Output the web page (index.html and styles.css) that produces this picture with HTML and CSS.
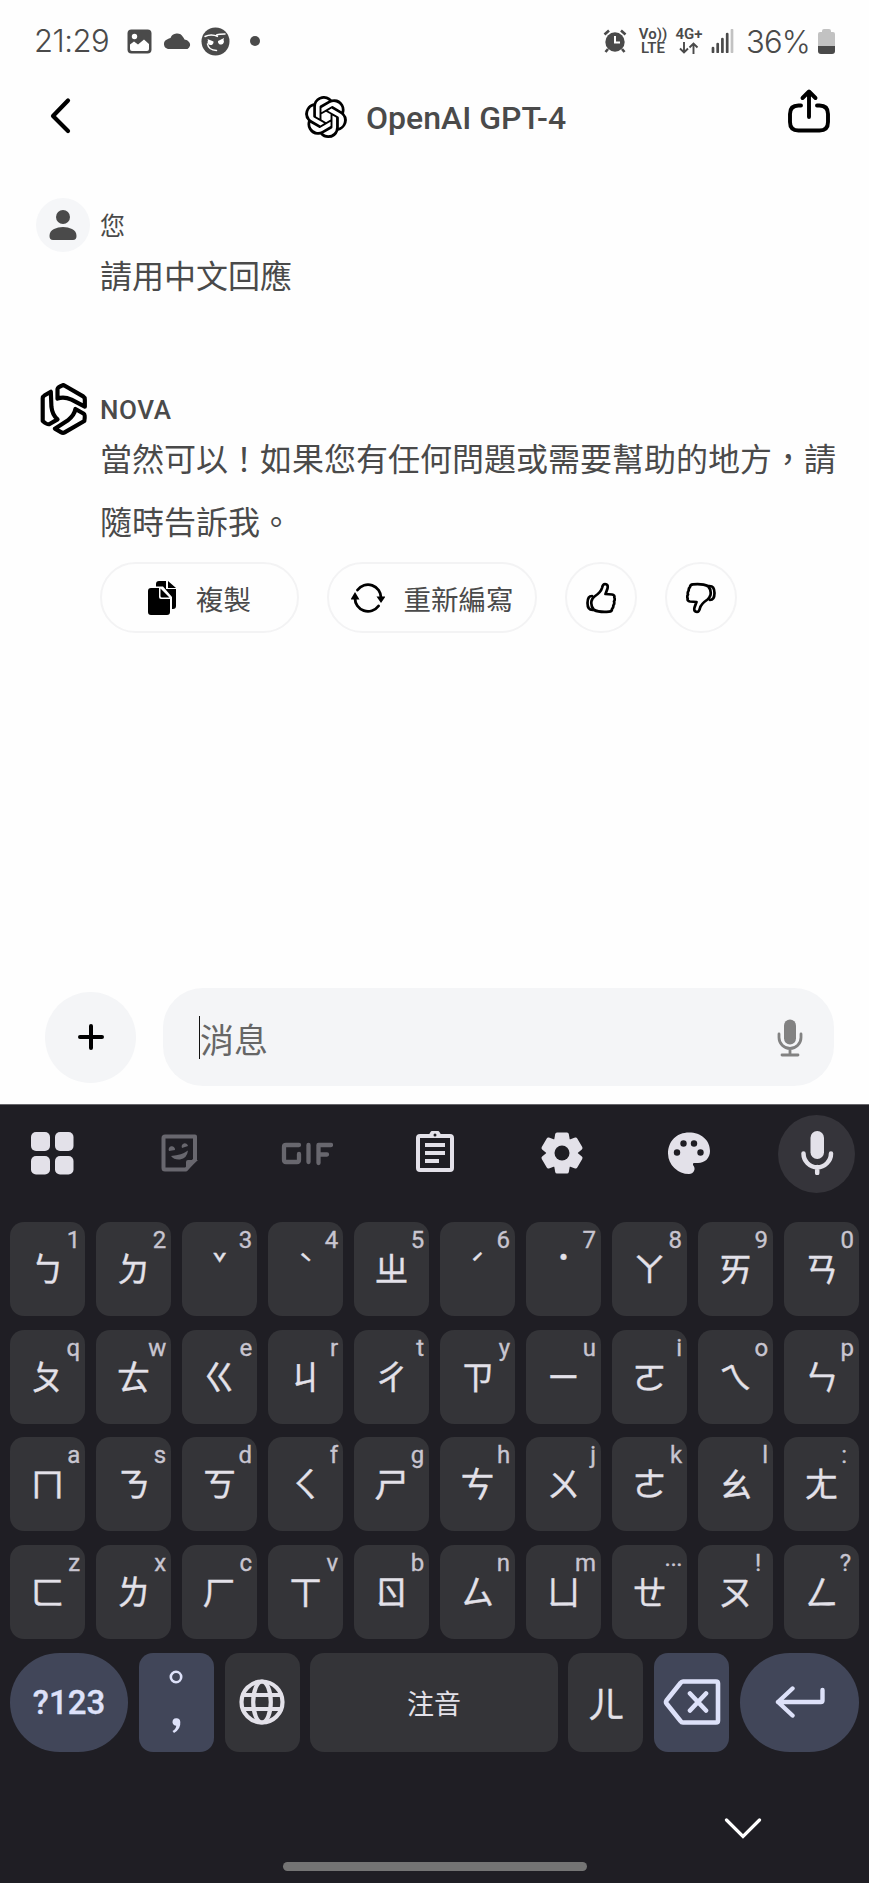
FILE: index.html
```html
<!DOCTYPE html>
<html lang="zh-Hant">
<head>
<meta charset="utf-8">
<title>OpenAI GPT-4</title>
<link rel="stylesheet" href="styles.css">
</head>
<body>
<div class="screen">
  <div class="status">
    <span class="clock">21:29</span>
    <svg class="st-image" width="25" height="25" viewBox="0 0 25 25"><rect x=".5" y=".5" width="24" height="24" rx="4" fill="#4a4a4a"/><circle cx="7.5" cy="7.5" r="2.7" fill="#fff"/><path d="M3 15.500 L7 12.500 L11 15.500 L17 10.500 L22 15 V20 Q22 22 20 22 H5 Q3 22 3 20Z" fill="#fff"/></svg>
    <svg class="st-cloud" width="28" height="16" viewBox="0 0 28 16"><path d="M5 16a5 5 0 0 1-1-9.500Q6 5 7.500 5A7 7 0 0 1 20 4q1 1 1.500 2.500 3 0 4.500 2.500a4.500 4.500 0 0 1-1.500 7Z" fill="#4a4a4a"/></svg>
    <svg class="st-face" width="29" height="29" viewBox="0 0 29 29"><circle cx="14.500" cy="14.500" r="14" fill="#4a4a4a"/><g fill="none" stroke="#fff" stroke-width="1.500" stroke-linecap="round"><path d="M4 9.500Q10 6.500 17 9.500Q12 7 24 7M6.500 17q1 6 9 6.500"/></g><path d="M6.500 12l6 2.500a3 3 0 1 1-5.500-1zM23 11l-6 3a3 3 0 1 0 5.500-1z" fill="#fff"/></svg>
    <i class="st-dot"></i>
    <div class="status-right">
      <svg class="alarm" width="24" height="24" viewBox="0 0 24 24"><circle cx="12" cy="13" r="9.700" fill="#4a4a4a"/><path d="M1.500 5.500L6 1.500M22.500 5.500L18 1.500M5 20l-2.500 3M19 20l2.500 3" stroke="#4a4a4a" stroke-width="2.600"/><path d="M12 7v6.500h5" fill="none" stroke="#fff" stroke-width="2"/></svg>
      <span class="mini volte"><b>Vo))</b><b>LTE</b></span>
      <span class="mini net"><b>4G+</b><svg width="20" height="12" viewBox="0 0 20 12"><path d="M5 0v10.500M1 6.500l4 4 4-4M14.500 12V1.500M10.500 5.500l4-4 4 4" fill="none" stroke="#4a4a4a" stroke-width="1.900"/></svg></span>
      <svg class="signal" width="23" height="24" viewBox="0 0 23 24"><path d="M2 19v4M6.700 15v8M11.400 10v13M16.200 5v18" stroke="#4a4a4a" stroke-width="2.700" stroke-linecap="round"/><path d="M21 1v22" stroke="#c2c2c2" stroke-width="2.700" stroke-linecap="round"/></svg>
      <span class="percent">36%</span>
      <svg width="17" height="25" viewBox="0 0 17 25"><path d="M0 5q0-2 2-2h2V2q0-2 2-2h5q2 0 2 2v1h2q2 0 2 2v12.500H0z" fill="#c2c2c2"/><path d="M0 17h17v5q0 3-3 3H3q-3 0-3-3z" fill="#4a4a4a"/></svg>
    </div>
  </div>

  <header class="header">
    <svg width="24" height="38" viewBox="0 0 24 38"><path d="M19 3.500L4 19l15 15" fill="none" stroke="#000" stroke-width="4.200" stroke-linecap="round" stroke-linejoin="round"/></svg>
    <div class="title">
      <svg width="42" height="42" viewBox="0 0 24 24"><path d="M22.2819 9.8211a5.9847 5.9847 0 0 0-.5157-4.9108 6.0462 6.0462 0 0 0-6.5098-2.9A6.0651 6.0651 0 0 0 4.9807 4.1818a5.9847 5.9847 0 0 0-3.9977 2.9 6.0462 6.0462 0 0 0 .7427 7.0966 5.98 5.98 0 0 0 .511 4.9107 6.051 6.051 0 0 0 6.5146 2.9001A5.9847 5.9847 0 0 0 13.2599 24a6.0557 6.0557 0 0 0 5.7718-4.2058 5.9894 5.9894 0 0 0 3.9977-2.9001 6.0557 6.0557 0 0 0-.7475-7.0729zm-9.022 12.6081a4.4755 4.4755 0 0 1-2.8764-1.0408l.1419-.0804 4.7783-2.7582a.7948.7948 0 0 0 .3927-.6813v-6.7369l2.02 1.1686a.071.071 0 0 1 .038.052v5.5826a4.504 4.504 0 0 1-4.4945 4.4944zm-9.6607-4.1254a4.4708 4.4708 0 0 1-.5346-3.0137l.142.0852 4.783 2.7582a.7712.7712 0 0 0 .7806 0l5.8428-3.3685v2.3324a.0804.0804 0 0 1-.0332.0615L9.74 19.9502a4.4992 4.4992 0 0 1-6.1408-1.6464zM2.3408 7.8956a4.485 4.485 0 0 1 2.3655-1.9728V11.6a.7664.7664 0 0 0 .3879.6765l5.8144 3.3543-2.0201 1.1685a.0757.0757 0 0 1-.071 0l-4.8303-2.7865A4.504 4.504 0 0 1 2.3408 7.872zm16.5963 3.8558L13.1038 8.364 15.1192 7.2a.0757.0757 0 0 1 .071 0l4.8303 2.7913a4.4944 4.4944 0 0 1-.6765 8.1042v-5.6772a.79.79 0 0 0-.407-.667zm2.0107-3.0231l-.142-.0852-4.7735-2.7818a.7759.7759 0 0 0-.7854 0L9.409 9.2297V6.8974a.0662.0662 0 0 1 .0284-.0615l4.8303-2.7866a4.4992 4.4992 0 0 1 6.6802 4.66zM8.3065 12.863l-2.02-1.1638a.0804.0804 0 0 1-.038-.0567V6.0742a4.4992 4.4992 0 0 1 7.3757-3.4537l-.142.0805L8.704 5.459a.7948.7948 0 0 0-.3927.6813zm1.0976-2.3654l2.602-1.4998 2.6069 1.4998v2.9994l-2.5974 1.4997-2.6067-1.4997Z"/></svg>
      <h1>OpenAI GPT-4</h1>
    </div>
    <svg class="share" width="44" height="46" viewBox="0 0 44 46"><path d="M14 17.500h-2.500Q3 17.500 3 26v8q0 8.500 8.500 8.500h21q8.500 0 8.500-8.500v-8q0-8.500-8.500-8.500H30M22 29V4M15.500 10L22 3.500l6.500 6.500" fill="none" stroke="#000" stroke-width="3.900" stroke-linecap="round" stroke-linejoin="round"/></svg>
  </header>

  <main class="chat">
    <section class="message first">
      <div class="who">
        <span class="avatar"><svg width="28" height="32" viewBox="0 0 28 32"><circle cx="14" cy="8" r="7" fill="#4a4a4a"/><path d="M.5 27Q.5 22 5 20q4-2 9-2t9 2q4.500 2 4.500 7 0 4-3.500 4H4Q.5 31 .5 27z" fill="#4a4a4a"/></svg></span>
        <span class="you">您</span>
      </div>
      <p class="text">請用中文回應</p>
    </section>
    <section class="message second">
      <div class="who">
        <span class="nova-logo"><svg width="49" height="54" viewBox="-73 -81 146 162"><g fill="none" stroke="#000" stroke-width="12.500" stroke-linejoin="round"><path id="arm" d="M-18-31V-60Q-17-66 0-72L59-38Q64-35 64-28V-7L24-28Q1-38-18-31Z"/><use href="#arm" transform="rotate(120)"/><use href="#arm" transform="rotate(240)"/></g></svg></span>
        <span class="nova">NOVA</span>
      </div>
      <p class="text">當然可以！如果您有任何問題或需要幫助的地方，請隨時告訴我。</p>
      <div class="actions">
        <button class="pill copy"><svg width="29" height="34" viewBox="0 0 29 34"><path d="M8 3q0-3 3-3h7v8h10v17q0 3-3 3h-1V16L15 5.500H8zM20 0l8 7h-8z"/><path d="M0 10q0-3 3-3h8v9q0 2 2 2h9v13q0 3-3 3H3q-3 0-3-3zM12.500 7.500l9 9h-7.500q-1.500 0-1.500-1.500z"/></svg>複製</button>
        <button class="pill redo"><svg width="34" height="30" viewBox="0 0 34 30"><path d="M6.500 7a13 13 0 0 1 23.500 8M27.500 23A13 13 0 0 1 4 15" fill="none" stroke="#000" stroke-width="2.800" stroke-linecap="round"/><path d="M4 9l4.500 7.500h-9zM30 20l-4.500-6.500h9z"/></svg>重新編寫</button>
        <button class="round"><svg width="30" height="32" viewBox="0 0 30 32"><path id="thumb" d="M8.500 14.500Q15 10 16 6q.8-4 3-4 3.500.2 2.500 4.500l-2 5.500 6.500.5q3 .5 2.300 3 1 2-.3 4 .8 2-.7 4 .3 2-1.300 3.500 0 2.500-3 2.700Q13 30.500 8 28 4.500 24 5.500 19q1-3 3-4.500zM6 14Q1.500 14 1.500 21t5 7H9" fill="none" stroke="#000" stroke-width="2.700" stroke-linejoin="round" stroke-linecap="round"/></svg></button>
        <button class="round"><svg class="down" width="30" height="32" viewBox="0 0 30 32"><use href="#thumb"/></svg></button>
      </div>
    </section>
  </main>

  <div class="composer">
    <span class="plus"><svg width="26" height="26" viewBox="0 0 26 26"><path d="M13 2v22M2 13h22" stroke="#000" stroke-width="4" stroke-linecap="round"/></svg></span>
    <div class="field"><i class="caret"></i><span>消息</span>
      <svg width="26" height="38" viewBox="0 0 26 38"><rect x="7" y=".5" width="12" height="25" rx="6" fill="#828282"/><path d="M2 15v3.500a11 11 0 0 0 22 0V15M13 30v6M5 36h16" fill="none" stroke="#828282" stroke-width="2.800" stroke-linecap="round"/></svg>
    </div>
  </div>

  <div class="keyboard">
    <div class="tools">
      <svg viewBox="0 0 44 44" fill="#e3e1e9"><rect x="1" y="1" width="19" height="19" rx="5"/><rect x="25" y="1" width="18.500" height="19" rx="5"/><rect x="1" y="25" width="19" height="18.500" rx="5"/><rect x="25" y="25" width="18.500" height="18.500" rx="5"/></svg>
      <svg viewBox="0 0 44 44"><path d="M7 5.500h30v23L28 38.500H7q-1.500 0-1.500-1.500V7q0-1.500 1.500-1.500z" fill="none" stroke="#68676e" stroke-width="4" stroke-linejoin="round"/><path d="M28 40V31q0-2 2-2h10zM11 20a3.200 3.200 0 1 1 6-1zM24 17a3.200 3.200 0 1 1 6-2zM13 25Q24 24 30 19.500q-1 8-8 9-6 .5-9-3.500z" fill="#68676e"/></svg>
      <span class="gif"><svg viewBox="0 0 52 24"><path d="M18 3H5Q3 3 3 5v13q0 2 2 2h11q2 0 2-2v-6M27.500 3v17M37.500 21V3H50M37.500 12.500H46" fill="none" stroke="#68676e" stroke-width="4.300" stroke-linejoin="round" stroke-linecap="round"/></svg></span>
      <svg viewBox="0 0 44 44" fill="none" stroke="#e3e1e9"><rect x="5" y="5" width="34" height="34" rx="2" stroke-width="4"/><path d="M12 14h20M12 22h20M12 30h14" stroke-width="4"/><path d="M16 5a6 6 0 0 1 12 0z" fill="#e3e1e9" stroke="none"/><circle cx="22" cy="4" r="1.500" fill="#1f1e24" stroke="none"/></svg>
      <svg viewBox="0 0 44 44"><g fill="#e3e1e9"><circle cx="22" cy="22" r="15.500"/><g id="teeth"><path id="tooth" d="M17 1.500h10q1.500 0 1.800 1.500l1.200 7H14l1.200-7q.3-1.500 1.800-1.500z"/><use href="#tooth" transform="rotate(60 22 22)"/><use href="#tooth" transform="rotate(120 22 22)"/></g><use href="#teeth" transform="rotate(180 22 22)"/></g><circle cx="22" cy="22" r="7.500" fill="#1f1e24"/></svg>
      <svg viewBox="0 0 44 44"><path d="M22 1.500C34 1.500 43 9 43 20c0 7-5 12-12 12h-4q-1.500 0-1 2 2.500 3 1 6-1.500 3-5 3A21 21 0 0 1 1 22.500C1 10 10 1.500 22 1.500z" fill="#e3e1e9"/><g fill="#1f1e24"><circle cx="10" cy="21.500" r="3.200"/><circle cx="16.500" cy="12.500" r="3.200"/><circle cx="27" cy="12.500" r="3.200"/><circle cx="33.500" cy="21.500" r="3.200"/></g></svg>
      <span class="mic"><svg viewBox="0 0 44 44"><rect x="15.500" y="0" width="13.500" height="28" rx="6.700" fill="#e3e1e9"/><path d="M8.500 22.500a13.700 13.700 0 0 0 27.500 0M22.200 36v6" fill="none" stroke="#e3e1e9" stroke-width="4.500" stroke-linecap="round"/></svg></span>
    </div>
    <div class="rows">
      <div class="row"><span class="key"><small>1</small>ㄅ</span><span class="key"><small>2</small>ㄉ</span><span class="key tone"><small>3</small>ˇ</span><span class="key tone"><small>4</small>ˋ</span><span class="key"><small>5</small>ㄓ</span><span class="key tone"><small>6</small>ˊ</span><span class="key tone dot"><small>7</small>˙</span><span class="key"><small>8</small>ㄚ</span><span class="key"><small>9</small>ㄞ</span><span class="key"><small>0</small>ㄢ</span></div>
      <div class="row"><span class="key"><small>q</small>ㄆ</span><span class="key"><small>w</small>ㄊ</span><span class="key"><small>e</small>ㄍ</span><span class="key"><small>r</small>ㄐ</span><span class="key"><small>t</small>ㄔ</span><span class="key"><small>y</small>ㄗ</span><span class="key"><small>u</small>ㄧ</span><span class="key"><small>i</small>ㄛ</span><span class="key"><small>o</small>ㄟ</span><span class="key"><small>p</small>ㄣ</span></div>
      <div class="row"><span class="key"><small>a</small>ㄇ</span><span class="key"><small>s</small>ㄋ</span><span class="key"><small>d</small>ㄎ</span><span class="key"><small>f</small>ㄑ</span><span class="key"><small>g</small>ㄕ</span><span class="key"><small>h</small>ㄘ</span><span class="key"><small>j</small>ㄨ</span><span class="key"><small>k</small>ㄜ</span><span class="key"><small>l</small>ㄠ</span><span class="key"><small class="in">:</small>ㄤ</span></div>
      <div class="row"><span class="key"><small>z</small>ㄈ</span><span class="key"><small>x</small>ㄌ</span><span class="key"><small>c</small>ㄏ</span><span class="key"><small>v</small>ㄒ</span><span class="key"><small>b</small>ㄖ</span><span class="key"><small>n</small>ㄙ</span><span class="key"><small>m</small>ㄩ</span><span class="key"><small class="dots">...</small>ㄝ</span><span class="key"><small class="in">!</small>ㄡ</span><span class="key"><small class="in2">?</small>ㄥ</span></div>
      <div class="row last">
        <span class="key oval sym">?123</span>
        <span class="key blue punct"><svg width="14" height="64" viewBox="0 0 14 64"><circle cx="7" cy="7" r="5.200" fill="none" stroke="#dde1f9" stroke-width="2.600"/><path d="M3.500 52.500a3.700 3.700 0 1 1 7.800-.5q.7 7-6.300 11l-1.500-2Q7 59 7.300 55.700 4 55.500 3.500 52.500z" fill="#dde1f9"/></svg></span>
        <span class="key"><svg width="46" height="46" viewBox="0 0 46 46" fill="none" stroke="#e3e1e9" stroke-width="4.200"><circle cx="23" cy="23" r="20.500"/><ellipse cx="23" cy="23" rx="8.800" ry="20.500"/><path d="M4 16h38M4 30h38"/></svg></span>
        <span class="key space">注音</span>
        <span class="key er">ㄦ</span>
        <span class="key blue"><svg width="58" height="48" viewBox="0 0 58 48" fill="none" stroke="#dde1f9" stroke-width="4.600" stroke-linejoin="round" stroke-linecap="round"><path d="M20 3.500H53Q55 3.500 55 5.500V42.500Q55 44.500 53 44.500H20Q18.500 44.500 17.500 43L3.500 25.500Q2.500 24 3.500 22.500L17.500 5Q18.500 3.500 20 3.500zM27 15.500l16 17M43 15.500L27 32.500"/></svg></span>
        <span class="key oval enter"><svg width="50" height="32" viewBox="0 0 50 32"><path d="M17.500 2.500L3 16l14.500 13.500M3 16H46q1.500 0 1.500-1.500V4" fill="none" stroke="#dde1f9" stroke-width="4.400" stroke-linejoin="round" stroke-linecap="round"/></svg></span>
      </div>
    </div>
    <div class="navbar">
      <svg width="38" height="22" viewBox="0 0 38 22"><path d="M2.500 2L19 18.500 35.500 2" fill="none" stroke="#fff" stroke-width="3.200" stroke-linecap="round"/></svg>
      <i class="handle"></i>
    </div>
  </div>
</div>
</body>
</html>
```
FILE: styles.css
```css
* { box-sizing: border-box; }
body { margin: 0; background: #fefefe; color: #4a4a4a; font-family: Roboto, "Noto Sans CJK TC", sans-serif; }
svg { display: block; flex: none; }
p, h1 { margin: 0; }
.screen { width: 869px; height: 1883px; display: flex; flex-direction: column; overflow: hidden; }

.status { height: 82px; display: flex; align-items: center; padding: 0 34px 0 34px; }
.clock, .percent { font-family: Inter, sans-serif; font-weight: 300; font-size: 31px; line-height: 40px; white-space: nowrap; }
.clock { width: 93px; letter-spacing: -.5px; }
.st-cloud { margin-left: 11px; }
.st-face { margin-left: 10px; }
.st-dot { width: 10px; height: 10px; border-radius: 50%; background: #4a4a4a; margin-left: 20px; }
.status-right { margin-left: auto; display: flex; align-items: center; }
.mini { display: flex; flex-direction: column; align-items: center; font-size: 15px; line-height: 13.500px; height: 26px; }
.mini b { font-weight: 600; }
.volte { width: 26px; margin-left: 13px; }
.net { width: 28px; margin-left: 9px; }
.signal { margin-left: 8px; }
.percent { margin-left: 12px; width: 72px; letter-spacing: -.8px; padding-top: 1px; }

.header { height: 68px; display: flex; align-items: center; padding: 0 38px 0 49px; }
.title { display: flex; align-items: center; gap: 19px; margin: 1px auto 0 232px; }
.title h1 { font-size: 32px; line-height: 40px; font-weight: 500; padding-top: 2px; }
.share { margin-top: -11px; }

.chat { flex: none; height: 834px; padding: 48px 0 0 36px; }
.message { width: 806px; }
.who { display: flex; align-items: center; height: 54px; }
.avatar, .nova-logo { width: 54px; height: 54px; margin-right: 10px; display: flex; align-items: center; justify-content: center; }
.avatar { border-radius: 50%; background: #f5f6f8; }
.you { font-size: 25px; line-height: 30px; padding-top: 4px; }
.nova { font-size: 26px; font-weight: 500; line-height: 30px; letter-spacing: .6px; padding-top: 1px; }
.text { font-size: 32px; line-height: 63px; margin-left: 64px; margin-top: -7px; }
.first .text { margin-top: -6px; }
.first { height: 184px; }
.actions { display: flex; gap: 28px; margin: 7px 0 0 64px; }
.pill, .round { height: 71px; border: 2px solid #f3f3f4; background: transparent; color: #4a4a4a; padding: 0; font: 27.500px "Noto Sans CJK TC", sans-serif; display: flex; align-items: center; justify-content: center; border-radius: 36px; }
.copy { width: 199px; gap: 19px; }
.redo { width: 210px; gap: 19px; }
.round { width: 72px; }
.down { transform: rotate(180deg); }

.composer { height: 120px; padding: 4px 35px 18px 45px; display: flex; align-items: center; justify-content: space-between; }
.plus { width: 91px; height: 91px; border-radius: 50%; background: #f4f5f7; display: flex; align-items: center; justify-content: center; }
.field { width: 671px; height: 98px; border-radius: 40px; background: #f4f5f7; display: flex; align-items: center; padding: 0 31px 0 36px; font-size: 34px; color: #666; }
.field svg { margin: 2px 0 0 auto; }
.field span { padding-top: 2px; }
.caret { width: 1px; height: 43px; background: #111; }

.keyboard { flex: 1; background: #1f1e24; display: flex; flex-direction: column; border-top: 1px solid #66656a; }
.tools { height: 117px; padding: 10px 14px 0 30px; display: flex; align-items: flex-start; gap: 83.200px; }
.tools > :nth-child(2) { margin-left: 1px; }
.tools svg { width: 44px; height: 44px; margin-top: 16px; }
.tools .gif { width: 44px; margin-top: 11px; }
.tools .gif svg { width: 52px; height: 24px; margin-left: -4px; }
.tools .mic { width: 78px; height: 78px; border-radius: 50%; background: #35343a; margin-left: -16px; }
.tools .mic svg { margin: 16px auto 0; }
.rows { padding: 0 10px; display: flex; flex-direction: column; gap: 13.700px; }
.row { display: flex; gap: 10.800px; height: 94px; }
.key { position: relative; flex: 1; border-radius: 14px; background: #343438; color: #e3e1e9; font: 400 34px/92px "Noto Sans CJK TC", sans-serif; display: flex; align-items: flex-start; justify-content: center; -webkit-text-stroke: .35px currentColor; }
.tone { font-size: 23px; font-weight: 500; line-height: 80px; }
.tone.dot { line-height: 67px; font-size: 30px; }
.key small { position: absolute; right: 5px; top: 4px; font: 24px/28px Roboto, sans-serif; color: #c8c5d0; }
.key .in { right: 12px; }
.key .in2 { right: 8px; }
.key .dots { right: 5px; top: -1px; letter-spacing: -.5px; }
.row.last { height: 99px; }
.last .key { flex: none; width: 75px; line-height: 97px; align-items: center; }
.last .oval { width: 118px; border-radius: 50px; background: #414659; color: #dde1f9; }
.last .sym { font-family: Roboto, sans-serif; font-size: 33px; font-weight: 500; }
.last .enter { width: 119px; }
.last .blue { background: #414659; }
.last .space { width: auto; flex: 1; font-size: 27px; -webkit-text-stroke: 0; }
.last .er { font-size: 36px; }
.navbar { flex: 1; display: flex; flex-direction: column; align-items: center; justify-content: space-between; padding: 66px 0 12px; }
.navbar svg { margin-left: 616px; }
.handle { width: 304px; height: 9px; border-radius: 5px; background: #747474; }
```
